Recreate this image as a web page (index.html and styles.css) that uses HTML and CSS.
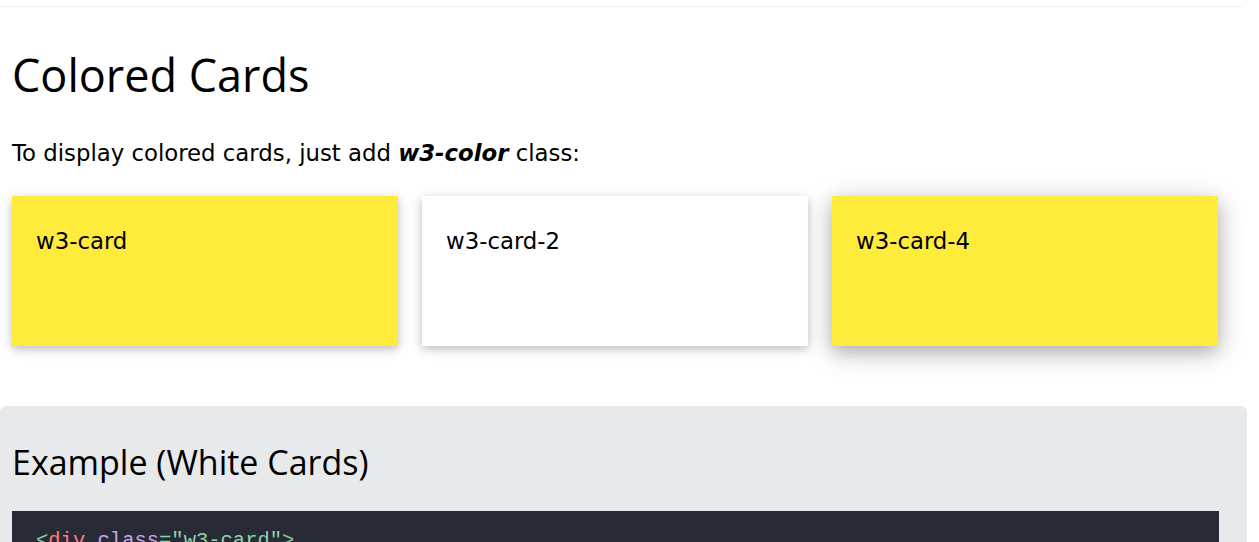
FILE: index.html
```html
<!DOCTYPE html>
<html lang="en">
<head>
    <meta charset="UTF-8">
    <meta name="viewport" content="width=device-width, initial-scale=1.0">
    <title>Colored Cards</title>
    <link rel="stylesheet" href="styles.css">
</head>
<body>
    <div class="topbar"></div>
    <div class="main">
        <h1>Colored Cards</h1>
        <p class="intro">To display colored cards, just add <b><i>w3-color</i></b> class:</p>

        <div class="card-row">
            <div class="card yellow">
                <p>w3-card</p>
            </div>
            <div class="card">
                <p>w3-card-2</p>
            </div>
            <div class="card card-4 yellow">
                <p>w3-card-4</p>
            </div>
        </div>

        <div class="example">
            <h2>Example (White Cards)</h2>
            <div class="code"><span class="tag-br">&lt;</span><span class="tag-name">div</span> <span class="attr">class</span><span class="attr-val">="w3-card"</span><span class="tag-br">&gt;</span></div>
        </div>
    </div>
</body>
</html>
```

FILE: styles.css
```css
body {
    margin: 0;
    padding: 0;
    background: #fff;
    color: #000;
    font-family: Verdana, "DejaVu Sans", sans-serif;
    font-size: 22.8px;
    line-height: 1.5;
    overflow: hidden;
}
.topbar {
    width: 1242px;
    height: 6px;
    border-bottom: 1px solid #eee;
}
.main {
    padding-left: 12px;
    width: 1206px;
}
h1, h2 {
    font-family: "Segoe UI", "Open Sans", sans-serif;
    font-weight: 400;
    margin: 0;
}
h1 {
    font-size: 45px;
    line-height: 60px;
    margin-top: 38px;
}
.intro {
    margin: 31px 0 0;
}
.card-row {
    display: grid;
    grid-template-columns: repeat(3, 1fr);
    gap: 24px;
    margin-top: 26px;
}
.card {
    height: 150px;
    padding: 0 24px;
    background: #fff;
    box-shadow: 0 3px 7px 0 rgba(0,0,0,0.16), 0 3px 15px 0 rgba(0,0,0,0.12);
}
.card p {
    margin: 28px 0 0;
}
.card-4 {
    box-shadow: 0 6px 15px 0 rgba(0,0,0,0.2), 0 6px 30px 0 rgba(0,0,0,0.19);
}
.yellow {
    background: #ffeb3b;
}
.example {
    margin: 60px 0 0 -12px;
    width: 1223px;
    padding: 31px 12px 20px 12px;
    background: #e7e9eb;
    border-radius: 6px;
}
h2 {
    font-size: 34px;
    line-height: 50px;
}
.code {
    margin-top: 24px;
    padding: 15px 24px;
    width: 1159px;
    background: #282a35;
    color: #ddd;
    font-family: Consolas, "Liberation Mono", monospace;
    font-size: 20.5px;
    line-height: 1.5;
}
.tag-br { color: #88c9a5; }
.tag-name { color: #ff7b7b; }
.attr { color: #c9a4f0; }
.attr-val { color: #88d6a8; }
```
